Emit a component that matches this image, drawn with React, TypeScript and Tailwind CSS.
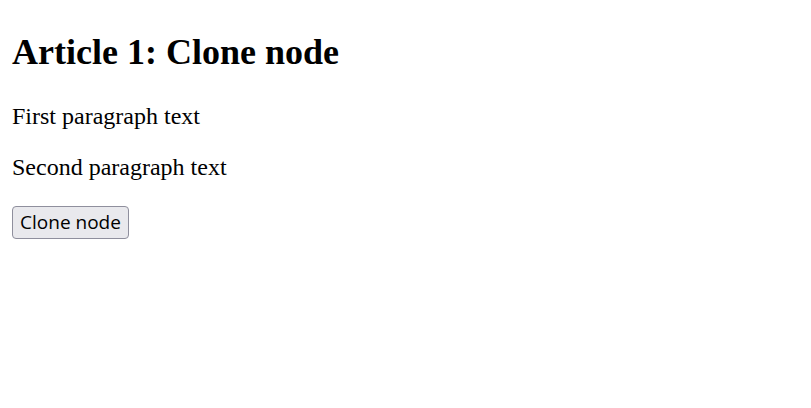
export default function App() {
  return (
    <div className="min-h-[408px] bg-white px-[12px] pt-[31.5px] text-black" style={{ fontFamily: '"Liberation Serif", serif' }}>
      <h1 className="mb-[29.88px] text-[36px] font-bold leading-[41.4px]">Article 1: Clone node</h1>
      <p className="mb-[24px] text-[24px] leading-[27.6px]">First paragraph text</p>
      <p className="mb-[24px] text-[24px] leading-[27.6px]">Second paragraph text</p>
      <button className="flex h-[33px] w-[117px] items-center justify-center rounded-[4px] border border-[#8f8f9d] bg-[#e9e9ed] text-[19px] leading-[24px] text-black" style={{ fontFamily: '"Open Sans", sans-serif' }}>
        Clone node
      </button>
    </div>
  );
}
